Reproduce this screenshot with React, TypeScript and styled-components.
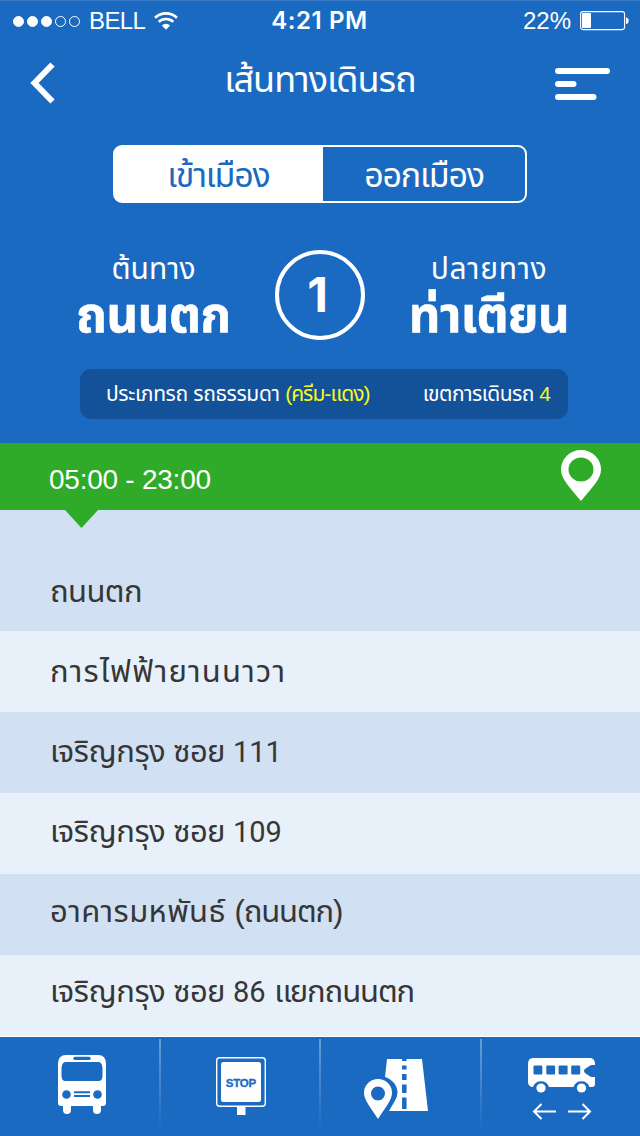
import React from "react";
import styled, { createGlobalStyle, css } from "styled-components";

const Global = createGlobalStyle`
  * { box-sizing: border-box; }
  body { margin: 0; background: #1b6ac2; }
  svg { display: block; }
`;

const sans = `"Liberation Sans", "Noto Sans Thai", Loma, "Noto Sans", sans-serif`;

const Screen = styled.div`
  width: 640px;
  height: 1136px;
  display: flex;
  flex-direction: column;
  overflow: hidden;
  background: #1b6ac2;
  border-top: 1px solid #3a7bc7;
  color: #fff;
  font-family: ${sans};
  & > * { flex-shrink: 0; }
`;

const Text = styled.span<{ $size: number; $ls?: number; $bold?: boolean; $dy?: number }>`
  display: block;
  white-space: pre;
  font-size: ${(p) => p.$size}px;
  line-height: 40px;
  height: 40px;
  letter-spacing: ${(p) => p.$ls ?? 0}px;
  font-weight: ${(p) => (p.$bold ? 700 : 400)};
  ${(p) => p.$bold && css`-webkit-text-stroke: 0.6px currentColor;`}
  ${(p) => p.$dy !== undefined && css`margin-top: ${p.$dy}px;`}
`;
const Word = styled.span<{ $ls: number }>`
  letter-spacing: ${(p) => p.$ls}px;
`;
const Digits = styled.span`
  font-family: Roboto, sans-serif;
  font-size: 29px;
  letter-spacing: 0;
`;
const Clock = styled.span`
  margin-right: 4px;
  font-family: Inter, sans-serif;
  font-weight: 600;
  font-size: 24px;
  line-height: 40px;
  letter-spacing: 0.6px;
`;

const StatusBar = styled.div`
  height: 40px;
  display: grid;
  grid-template-columns: 1fr auto 1fr;
  align-items: center;
  padding: 0 10px 0 13px;
`;
const StatusSide = styled.div<{ $end?: boolean }>`
  display: flex;
  align-items: center;
  justify-content: ${(p) => (p.$end ? "flex-end" : "flex-start")};
  gap: 9px;
`;
const Dots = styled.div`
  display: flex;
  gap: 3px;
`;
const Dot = styled.i<{ $on?: boolean }>`
  width: 11px;
  height: 11px;
  border-radius: 50%;
  border: 1px solid #fff;
  background: ${(p) => (p.$on ? "#fff" : "transparent")};
`;
const WifiIcon = styled.svg`
  margin-top: -2px;
`;

const NavBar = styled.header`
  height: 86px;
  display: grid;
  grid-template-columns: 100px 1fr 100px;
  padding: 0 29px;
`;
const NavTitle = styled.div`
  display: flex;
  justify-content: center;
  padding-top: 19px;
`;
const IconButton = styled.button<{ $end?: boolean }>`
  display: flex;
  align-items: flex-start;
  justify-content: ${(p) => (p.$end ? "flex-end" : "flex-start")};
  padding: ${(p) => (p.$end ? "26px 0 0" : "21px 0 0")};
  border: 0;
  background: none;
  color: inherit;
`;

const Segments = styled.div`
  width: 414px;
  height: 58px;
  margin: 18px 0 0 113px;
  display: grid;
  grid-template-columns: 208px 1fr;
  border: 2px solid #fff;
  border-radius: 9px;
`;
const Segment = styled.div<{ $active?: boolean }>`
  display: flex;
  justify-content: center;
  padding-top: 8px;
  ${(p) =>
    p.$active &&
    css`
      margin: -1px 0 -1px -1px;
      padding-top: 9px;
      border-radius: 8px 0 0 8px;
      background: #fff;
      color: #1b6ac2;
    `}
`;

const RouteRow = styled.section`
  height: 90px;
  margin-top: 47px;
  display: grid;
  grid-template-columns: 155px 90px 160px;
  justify-content: space-between;
  padding: 0 71px 0 76px;
`;
const Stop = styled.div`
  display: flex;
  flex-direction: column;
  align-items: center;
`;
const RouteNumber = styled.div`
  display: flex;
  align-items: center;
  justify-content: center;
  border: 4px solid #fff;
  border-radius: 50%;
  padding-right: 5px;
  font-family: Inter, sans-serif;
  line-height: 40px;
  font-size: 48px;
  font-weight: 700;
`;

const InfoPill = styled.div`
  width: 488px;
  height: 50px;
  margin: 29px 0 0 80px;
  padding: 5px 17px 0 26px;
  display: flex;
  justify-content: space-between;
  border-radius: 11px;
  background: #135298;
`;
const Accent = styled.span<{ $ls?: number }>`
  color: #fcf914;
  letter-spacing: ${(p) => p.$ls ?? 0}px;
`;

const Hours = styled.div`
  position: relative;
  height: 67px;
  margin-top: 24px;
  padding: 7px 39px 0 49px;
  display: flex;
  justify-content: space-between;
  background: #30ab29;
`;
const Pointer = styled.svg`
  position: absolute;
  left: 65px;
  top: 67px;
`;

const List = styled.ul`
  margin: 0;
  padding: 0;
  list-style: none;
  border-bottom: 1px solid #fff;
`;
const Row = styled.li<{ $top: number; $tall?: boolean }>`
  height: ${(p) => (p.$tall ? 121 : 81)}px;
  padding: ${(p) => p.$top}px 0 0 50px;
  background: #e8f0fa;
  color: #363636;
  &:nth-child(odd) { background: #d1e0f3; }
`;

const TabBar = styled.nav`
  height: 99px;
  display: grid;
  grid-template-columns: 160px 160px 161px 159px;
`;
const Tab = styled.div`
  position: relative;
  & + &::before {
    content: "";
    position: absolute;
    left: -1px;
    top: 2px;
    width: 2px;
    height: 92px;
    background: linear-gradient(#6a9cd8, #1b6ac2);
  }
`;

type Part = { text: string; ls?: number; digits?: boolean };
const stops: { top: number; parts: Part[] }[] = [
  { top: 62, parts: [{ text: "ถนนตก", ls: -0.6 }] },
  { top: 21, parts: [{ text: "การไฟฟ้ายานนาวา", ls: 1.2 }] },
  { top: 20, parts: [{ text: "เจริญกรุง", ls: -0.45 }, { text: " ซอย ", ls: -0.6 }, { text: "111", digits: true }] },
  { top: 19, parts: [{ text: "เจริญกรุง", ls: -0.45 }, { text: " ซอย ", ls: -0.6 }, { text: "109", digits: true }] },
  { top: 18, parts: [{ text: "อาคารมหพันธ์", ls: 0.4 }, { text: " " }, { text: "(ถนนตก)", ls: -1.1 }] },
  {
    top: 17,
    parts: [
      { text: "เจริญกรุง", ls: -0.45 },
      { text: " ซอย ", ls: -0.6 },
      { text: "86", digits: true },
      { text: " " },
      { text: "แยกถนนตก", ls: -1.1 },
    ],
  },
];

const Wifi = () => (
  <WifiIcon width="24" height="19" viewBox="0 0 24 19" fill="none" stroke="#fff" strokeWidth="2.6">
    <path d="M1 6.800a16 16 0 0 1 22 0" />
    <path d="M4.700 10.900a10.500 10.500 0 0 1 14.600 0" />
    <path d="M12 18.800 7.900 14.400a5.900 5.900 0 0 1 8.200 0z" fill="#fff" stroke="none" />
  </WifiIcon>
);

const Battery = () => (
  <svg width="50" height="20" viewBox="0 0 50 20">
    <rect x="0.6" y="0.6" width="44" height="18" rx="2.5" fill="none" stroke="#fff" strokeWidth="1.1" />
    <rect x="2" y="2" width="9" height="15" rx="1" fill="#fff" />
    <path d="M46 6.500c3.600 0 3.600 6.500 0 6.500z" fill="#fff" />
  </svg>
);

const BusFront = () => (
  <svg width="160" height="99" viewBox="0 1037 160 99">
    <path fill="#fff" fillRule="evenodd" d="M66 1055h32q8 0 8 9v39q0 3-3 3h-2v4q0 4-4 4t-4-4v-4H71v4q0 4-4 4t-4-4v-4h-2q-3 0-3-3v-39q0-9 8-9zM75 1056.700a1.700 1.700 0 0 0 0 3.400h14a1.700 1.700 0 0 0 0-3.400zM65 1062q-3.500 1-3.500 7v7q0 5 4 5h33q4 0 4-5v-7q0-6-3.500-7z" />
    <g fill="#1b6ac2">
      <circle cx="66.500" cy="1094.500" r="4.300" />
      <circle cx="97.500" cy="1094.500" r="4.300" />
      <path d="M74 1091.300h16v1.900H74zM74 1095h16v1.900H74z" />
    </g>
  </svg>
);

const StopSign = () => (
  <svg width="160" height="99" viewBox="160 1037 160 99">
    <rect x="216.700" y="1057.700" width="48.600" height="48.600" rx="3" fill="none" stroke="#fff" strokeWidth="1.400" />
    <rect x="221" y="1062" width="40" height="40" rx="2.500" fill="#fff" />
    <path d="M237 1107h8.500v8H237z" fill="#fff" />
    <text x="241" y="1087" textAnchor="middle" fontFamily="Liberation Sans, sans-serif" fontWeight="700" fontSize="11.500" textLength="30.500" fill="#1b6ac2" stroke="#1b6ac2" strokeWidth="0.300">STOP</text>
  </svg>
);

const RoadPin = () => (
  <svg width="160" height="99" viewBox="320 1037 160 99">
    <path fill="#fff" d="M387 1059h35l6 52h-39l5.500-9.500q3-5 3-9c0-7-5-13-12.500-15.500z" />
    <path stroke="#1b6ac2" strokeWidth="4.500" d="M404.300 1059v2M404.300 1065.500v4M404.300 1074v6M404.300 1084.500v8.500M404.300 1097.500v11.500" />
    <path fill="#fff" fillRule="evenodd" d="M378 1079a14 14 0 0 1 14 14c0 7-7 15-14 26c-7-11-14-19-14-26a14 14 0 0 1 14-14zM378 1086.500a7 7 0 1 0 0 14a7 7 0 0 0 0-14z" />
  </svg>
);

const BusSide = () => (
  <svg width="159" height="99" viewBox="481 1037 159 99">
    <path fill="#fff" d="M533 1058h57q4 0 5 5v2h-3q-2 0-4 2q-4 2-4 4t4 4q2 2 4 2h3v7q0 3-3 3h-2.500a8.500 8.500 0 0 0-16 0H549a8.500 8.500 0 0 0-16 0H532q-4-1-4-5v-18q0-6 5-6z" />
    <g fill="#1b6ac2">
      <rect x="533.500" y="1065.500" width="8.800" height="9" rx="1" />
      <rect x="546.300" y="1065.500" width="8.800" height="9" rx="1" />
      <rect x="558.600" y="1065.500" width="9" height="9" rx="1" />
      <rect x="571.200" y="1065.500" width="9" height="9" rx="1" />
    </g>
    <circle cx="541" cy="1088" r="4.600" fill="#fff" />
    <circle cx="581.500" cy="1088" r="4.600" fill="#fff" />
    <path fill="none" stroke="#fff" strokeWidth="2" d="M556 1111.500h-22M541.500 1104l-7.500 7.500l7.500 7.500M568 1111.500h22M582.500 1104l7.500 7.500l-7.500 7.500" />
  </svg>
);

export default function App() {
  return (
    <Screen>
      <Global />
      <StatusBar>
        <StatusSide>
          <Dots><Dot $on /><Dot $on /><Dot $on /><Dot /><Dot /></Dots>
          <Text $size={24} $ls={-0.6}>BELL</Text>
          <Wifi />
        </StatusSide>
        <Clock>4:21 PM</Clock>
        <StatusSide $end>
          <Text $size={24}>22%</Text>
          <Battery />
        </StatusSide>
      </StatusBar>
      <NavBar>
        <IconButton aria-label="back">
          <svg width="27" height="42" viewBox="0 0 27 42"><path d="M23.500 2.500 5.500 21 23.500 39.500" fill="none" stroke="#fff" strokeWidth="6" /></svg>
        </IconButton>
        <NavTitle><Text $size={36} $ls={-1}>เส้นทางเดินรถ</Text></NavTitle>
        <IconButton $end aria-label="menu">
          <svg width="56" height="34" viewBox="0 0 56 34"><path d="M3 4h49M3 17h15.500M3 30h35.500" stroke="#fff" strokeWidth="6" strokeLinecap="round" /></svg>
        </IconButton>
      </NavBar>
      <Segments>
        <Segment $active><Text $size={34} $ls={-1.2}>เข้าเมือง</Text></Segment>
        <Segment><Text $size={34} $ls={-1.2}>ออกเมือง</Text></Segment>
      </Segments>
      <RouteRow>
        <Stop>
          <Text $size={30} $dy={-1}>ต้นทาง</Text>
          <Text $size={49} $ls={-0.4} $bold $dy={6}>ถนนตก</Text>
        </Stop>
        <RouteNumber>1</RouteNumber>
        <Stop>
          <Text $size={30} $ls={0.7} $dy={-1}>ปลายทาง</Text>
          <Text $size={49} $ls={-0.5} $bold $dy={6}>ท่าเตียน</Text>
        </Stop>
      </RouteRow>
      <InfoPill>
        <Text $size={21} $ls={-0.35}>ประเภทรถ รถธรรมดา <Accent $ls={-0.95}>(ครีม-แดง)</Accent></Text>
        <Text $size={21} $ls={-0.5}>เขตการเดินรถ <Accent>4</Accent></Text>
      </InfoPill>
      <Hours>
        <Text $size={28} $ls={-0.25} $dy={10}>05:00 - 23:00</Text>
        <svg width="40" height="51" viewBox="0 0 40 51">
          <path fill="#fff" fillRule="evenodd" d="M20 0a20 19.500 0 0 1 20 19.500c0 9-7 16-20 31.500c-13-15.500-20-22.500-20-31.500a20 19.500 0 0 1 20-19.500zM20 7.500a12.500 12 0 1 0 0 24a12.500 12 0 0 0 0-24z" />
        </svg>
        <Pointer width="33" height="18" viewBox="0 0 33 18"><path d="M0 0h33L16.500 18z" fill="#30ab29" /></Pointer>
      </Hours>
      <List>
        {stops.map((s, i) => (
          <Row key={i} $top={s.top} $tall={i === 0}>
            <Text $size={31}>
              {s.parts.map((p, j) =>
                p.digits ? <Digits key={j}>{p.text}</Digits> : <Word key={j} $ls={p.ls ?? 0}>{p.text}</Word>
              )}
            </Text>
          </Row>
        ))}
      </List>
      <TabBar>
        <Tab><BusFront /></Tab>
        <Tab><StopSign /></Tab>
        <Tab><RoadPin /></Tab>
        <Tab><BusSide /></Tab>
      </TabBar>
    </Screen>
  );
}
